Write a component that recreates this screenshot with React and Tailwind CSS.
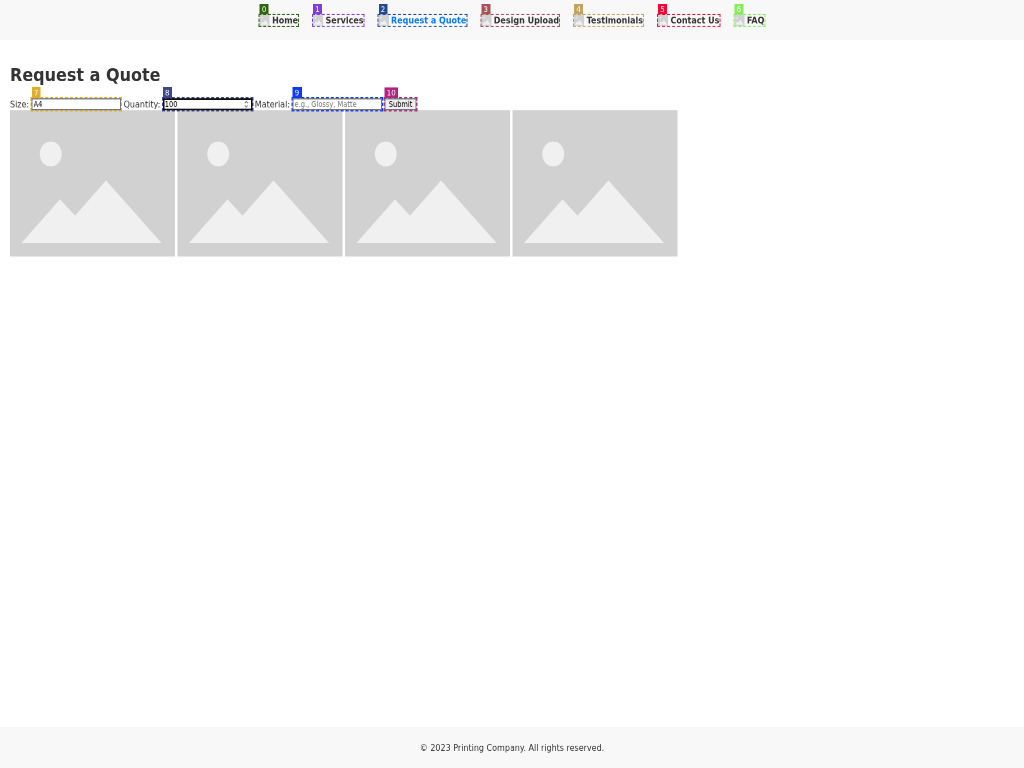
import React from 'react';

function Placeholder({ className }) {
  return (
    <svg className={className} viewBox="0 0 330 256" preserveAspectRatio="none">
      <rect width="330" height="256" fill="#d1d1d1" />
      <circle cx="81.5" cy="76.5" r="22" fill="#f0f0f0" />
      <path d="M23 232.500L100 156L130 184.500L192 123L303 232.500Z" fill="#f0f0f0" />
    </svg>
  );
}

function Marker({ id, tone }) {
  return (
    <>
      <span className={`pointer-events-none absolute -inset-[2px] border-[2.500px] border-dashed ${tone.border}`} />
      <span className={`absolute bottom-full left-0 mb-[1px] flex h-[18px] items-center px-[4.500px] text-[14px] font-normal leading-none text-white ${tone.bg}`}>
        {id}
      </span>
    </>
  );
}

const links = [
  { label: 'Home', tone: { border: 'border-[#316410]', bg: 'bg-[#316410]' } },
  { label: 'Services', tone: { border: 'border-[#7f3fd2]', bg: 'bg-[#7f3fd2]' } },
  { label: 'Request a Quote', tone: { border: 'border-[#244991]', bg: 'bg-[#244991]' }, active: true },
  { label: 'Design Upload', tone: { border: 'border-[#a8535a]', bg: 'bg-[#a8535a]' } },
  { label: 'Testimonials', tone: { border: 'border-[#c3a45b]', bg: 'bg-[#c3a45b]' } },
  { label: 'Contact Us', tone: { border: 'border-[#f80532]', bg: 'bg-[#f80532]' } },
  { label: 'FAQ', tone: { border: 'border-[#83ee59]', bg: 'bg-[#83ee59]' } },
];

const field = 'block h-[21px] w-[179px] bg-white text-[13.333px] text-black outline-none placeholder:text-[#757575]';

export default function App() {
  return (
    <div className="h-[768px] w-[1024px] overflow-hidden bg-white">
      <div className="flex h-[1344px] w-[2048px] origin-top-left scale-x-[0.5] scale-y-[0.571429] flex-col font-['DejaVu_Sans',sans-serif] text-[16px] leading-[19px] text-[#333] will-change-transform">
        <header className="flex h-[70px] shrink-0 items-center justify-center bg-[#f8f8f8]">
          <nav className="flex gap-[30px]">
            {links.map((l, i) => (
              <a key={l.label} className={`relative flex h-[19px] items-center gap-[5px] whitespace-nowrap font-bold ${l.active ? 'text-[#007bff]' : 'text-[#333]'}`}>
                <Placeholder className="h-[20px] w-[20px] shrink-0" />
                {l.label}
                <Marker id={i} tone={l.tone} />
              </a>
            ))}
          </nav>
        </header>
        <main className="flex-1 px-[20px] pt-[42px]">
          <h1 className="text-[32px] font-bold leading-[38px]">Request a Quote</h1>
          <form className="mt-[22px] flex h-[21px] items-center gap-[5px]">
            <label>Size:</label>
            <div className="relative">
              <input className={`${field} border-2 border-[#767676] px-[2px]`} defaultValue="A4" />
              <Marker id={7} tone={{ border: 'border-[#dfaf2c]', bg: 'bg-[#dfaf2c]' }} />
            </div>
            <label>Quantity:</label>
            <div className="relative">
              <input className={`${field} border-[3px] border-[#101010] px-[1px]`} defaultValue="100" />
              <svg className="absolute right-[8px] top-[4px] h-[13px] w-[9px]" viewBox="0 0 9 13" fill="none" stroke="#707070" strokeWidth="1.6">
                <path d="M1.500 4.500L4.500 1.500L7.500 4.500M1.500 8.500L4.500 11.500L7.500 8.500" />
              </svg>
              <Marker id={8} tone={{ border: 'border-[#3c478d]', bg: 'bg-[#3c478d]' }} />
            </div>
            <label>Material:</label>
            <div className="relative">
              <input className={`${field} border-2 border-[#767676] px-[2px]`} placeholder="e.g., Glossy, Matte" />
              <Marker id={9} tone={{ border: 'border-[#0c3cf0]', bg: 'bg-[#0c3cf0]' }} />
            </div>
            <div className="relative">
              <button type="button" className="block h-[21px] border-2 border-[#767676] bg-[#efefef] px-[6.500px] text-[13.333px] leading-[17px] text-black">Submit</button>
              <Marker id={10} tone={{ border: 'border-[#b02380]', bg: 'bg-[#b02380]' }} />
            </div>
          </form>
          <div className="flex gap-[5px]">
            {[0, 1, 2, 3].map((n) => (
              <Placeholder key={n} className="h-[255.500px] w-[330px]" />
            ))}
          </div>
        </main>
        <footer className="flex h-[71px] shrink-0 items-center justify-center bg-[#f8f8f8]">
          <p>© 2023 Printing Company. All rights reserved.</p>
        </footer>
      </div>
    </div>
  );
}
